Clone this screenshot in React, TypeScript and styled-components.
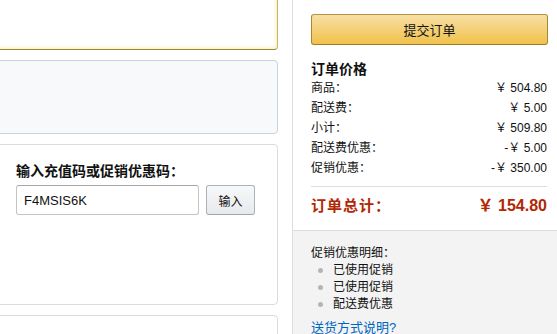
import styled, { createGlobalStyle } from 'styled-components'

const GlobalStyle = createGlobalStyle`
  html, body {
    margin: 0;
    padding: 0;
    background: #fff;
    overflow: hidden;
  }
  body {
    font-family: 'Liberation Sans', 'Noto Sans CJK SC', sans-serif;
    font-size: 12px;
    color: #111;
  }
`

const Page = styled.div`
  display: grid;
  grid-template-columns: 278px 265px;
  column-gap: 14px;
  width: 557px;
  height: 334px;
  overflow: hidden;
`

const LeftColumn = styled.div`
  display: flex;
  flex-direction: column;
  gap: 10px;
  margin-top: -12px;
  margin-left: -12px;
`

const Card = styled.div<{ $variant?: 'highlight' | 'muted' | 'plain' }>`
  box-sizing: border-box;
  border-radius: 4px;
  border: 1px solid
    ${({ $variant }) =>
      $variant === 'highlight' ? '#c9b467' : $variant === 'muted' ? '#c9d2dc' : '#dcdcdc'};
  border-bottom-color: ${({ $variant }) => ($variant === 'highlight' ? '#9a8638' : undefined)};
  background: ${({ $variant }) => ($variant === 'muted' ? '#f8f9fa' : '#fff')};
  box-shadow: ${({ $variant }) =>
    $variant === 'highlight' ? 'inset 0 0 3px 2px #fdf3d0' : 'none'};
`

const TopCard = styled(Card)`
  height: 62px;
`

const InfoCard = styled(Card)`
  height: 74px;
`

const CodeCard = styled(Card)`
  height: 161px;
  padding: 17px 0 0 27px;
`

const BottomCard = styled(Card)`
  height: 60px;
`

const CodeTitle = styled.div`
  font-size: 14px;
  font-weight: bold;
  line-height: 18px;
  color: #111;
`

const CodeRow = styled.div`
  display: flex;
  gap: 7px;
  margin-top: 5px;
`

const CodeInput = styled.input`
  box-sizing: border-box;
  width: 183px;
  height: 30px;
  padding: 0 7px;
  border: 1px solid #c4c4c4;
  border-top-color: #a6a6a6;
  border-radius: 3px;
  font-family: 'Liberation Sans', sans-serif;
  font-size: 13px;
  color: #111;
  outline: none;
`

const SmallButton = styled.button`
  box-sizing: border-box;
  width: 49px;
  height: 30px;
  border: 1px solid #adb1b8;
  border-bottom-color: #a2a6ac;
  border-radius: 3px;
  background: linear-gradient(to bottom, #f7f8fa, #e7e9ec);
  font-family: 'Noto Sans CJK SC', sans-serif;
  font-size: 12px;
  color: #111;
  padding: 0;
`

const RightPanel = styled.div`
  display: flex;
  flex-direction: column;
  border-left: 1px solid #dddddd;
`

const Summary = styled.div`
  padding: 14px 10px 12px 18px;
`

const SubmitButton = styled.button`
  box-sizing: border-box;
  width: 237px;
  height: 31px;
  border: 1px solid #a88734;
  border-color: #b7953c #a88734 #9c7e31;
  border-radius: 3px;
  background: linear-gradient(to bottom, #f7dfa5, #f0c14b);
  font-family: 'Noto Sans CJK SC', sans-serif;
  font-size: 13px;
  color: #111;
  padding: 0;
`

const SummaryTitle = styled.div`
  margin-top: 15px;
  font-size: 14px;
  font-weight: bold;
  line-height: 18px;
`

const PriceRow = styled.div`
  display: flex;
  justify-content: space-between;
  line-height: 20px;
  font-size: 12px;
`

const Divider = styled.div`
  height: 1px;
  background: #dddddd;
  margin-top: 8px;
`

const TotalRow = styled.div`
  display: flex;
  justify-content: space-between;
  align-items: center;
  margin-top: 7px;
  line-height: 24px;
  color: #b12704;
  font-weight: bold;
`

const TotalLabel = styled.span`
  font-size: 15px;
  letter-spacing: 1px;
`

const TotalValue = styled.span`
  font-size: 16px;
`

const PromoSection = styled.div`
  flex: 1;
  border-top: 1px solid #dddddd;
  background: #f3f3f3;
  padding: 13px 10px 0 18px;
`

const PromoTitle = styled.div`
  line-height: 18px;
  font-size: 12px;
`

const PromoList = styled.ul`
  margin: 0;
  padding: 0;
  list-style: none;
`

const PromoItem = styled.li`
  display: flex;
  align-items: center;
  line-height: 17px;
  font-size: 12px;

  &::before {
    content: '';
    width: 5px;
    height: 5px;
    border-radius: 50%;
    background: #b5b5b5;
    margin: 0 10px 0 7px;
  }
`

const HelpLink = styled.a`
  display: block;
  margin-top: 6px;
  line-height: 18px;
  font-size: 13px;
  color: #0066c0;
  text-decoration: none;
`

const prices = [
  { label: '商品：', value: '￥ 504.80' },
  { label: '配送费：', value: '￥ 5.00' },
  { label: '小计：', value: '￥ 509.80' },
  { label: '配送费优惠：', value: '-￥ 5.00' },
  { label: '促销优惠：', value: '-￥ 350.00' },
]

const promos = ['已使用促销', '已使用促销', '配送费优惠']

export default function App() {
  return (
    <>
      <GlobalStyle />
      <Page>
        <LeftColumn>
          <TopCard $variant="highlight" />
          <InfoCard $variant="muted" />
          <CodeCard>
            <CodeTitle>输入充值码或促销优惠码：</CodeTitle>
            <CodeRow>
              <CodeInput defaultValue="F4MSIS6K" />
              <SmallButton>输入</SmallButton>
            </CodeRow>
          </CodeCard>
          <BottomCard />
        </LeftColumn>

        <RightPanel>
          <Summary>
            <SubmitButton>提交订单</SubmitButton>
            <SummaryTitle>订单价格</SummaryTitle>
            {prices.map((p) => (
              <PriceRow key={p.label}>
                <span>{p.label}</span>
                <span>{p.value}</span>
              </PriceRow>
            ))}
            <Divider />
            <TotalRow>
              <TotalLabel>订单总计：</TotalLabel>
              <TotalValue>￥ 154.80</TotalValue>
            </TotalRow>
          </Summary>
          <PromoSection>
            <PromoTitle>促销优惠明细：</PromoTitle>
            <PromoList>
              {promos.map((p, i) => (
                <PromoItem key={i}>{p}</PromoItem>
              ))}
            </PromoList>
            <HelpLink href="#">送货方式说明?</HelpLink>
          </PromoSection>
        </RightPanel>
      </Page>
    </>
  )
}
